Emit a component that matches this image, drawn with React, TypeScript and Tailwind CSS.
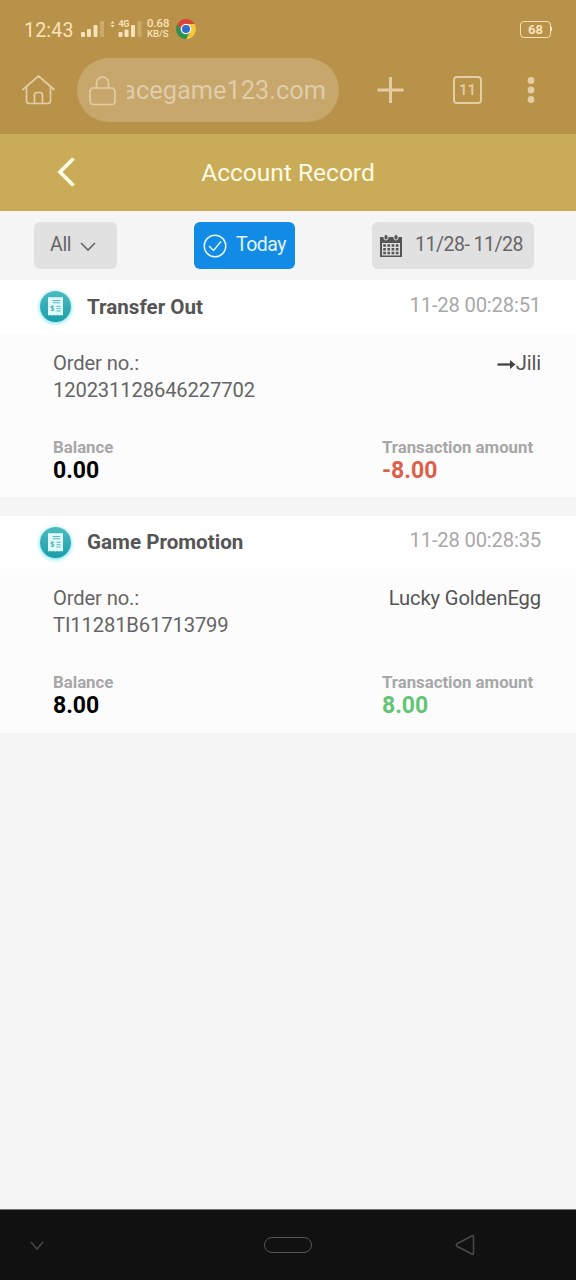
type TransactionRecord = {
  title: string;
  time: string;
  order: string;
  target: string;
  arrow?: boolean;
  balance: string;
  amount: string;
  amountClass: string;
};

const records: TransactionRecord[] = [
  {
    title: "Transfer Out",
    time: "11-28 00:28:51",
    order: "120231128646227702",
    target: "Jili",
    arrow: true,
    balance: "0.00",
    amount: "-8.00",
    amountClass: "text-[#dc6049]",
  },
  {
    title: "Game Promotion",
    time: "11-28 00:28:35",
    order: "TI11281B61713799",
    target: "Lucky GoldenEgg",
    balance: "8.00",
    amount: "8.00",
    amountClass: "text-[#63c474]",
  },
];

function StatusBar() {
  return (
    <div className="flex h-[58px] items-center pl-6 pr-6 text-[#f9e2b8]">
      <span className="mt-[3px] w-[50px] whitespace-nowrap text-[19.5px] leading-6 tracking-[0.2px]">12:43</span>
      <svg className="ml-1.5 h-[18px] w-[24px]" viewBox="80 20 24 18" fill="currentColor">
        <rect x="81" y="32" width="4" height="5" rx="1" />
        <rect x="87" y="29" width="4" height="8" rx="1" />
        <rect x="93.5" y="25" width="4" height="12" rx="1" />
        <rect x="100" y="21" width="4" height="16" rx="1" opacity=".3" />
      </svg>
      <div className="relative ml-[5px] h-[18px] w-[33px]">
        <svg className="h-[18px] w-[33px]" viewBox="109 20 33 18" fill="currentColor">
          <path d="M110.500 23.400 112.600 21l2.100 2.400zM110.500 25l2.100 2.400 2.100-2.400z" />
          <rect x="118.500" y="32" width="4" height="5" rx="1" />
          <rect x="124.500" y="29.500" width="4" height="7.500" rx="1" />
          <rect x="131" y="25" width="4" height="12" rx="1" />
          <rect x="137.500" y="21" width="4" height="16" rx="1" opacity=".3" />
        </svg>
        <span className="absolute left-[9.5px] top-0 text-[9px] font-bold leading-[8px] tracking-[-0.5px]">4G</span>
      </div>
      <div className="ml-[5px] flex w-[24px] flex-col whitespace-nowrap font-medium">
        <span className="text-[11.3px] leading-[10px]">0.68</span>
        <span className="text-[9.5px] leading-[10px]">KB/S</span>
      </div>
      <svg className="ml-[5px] h-[20px] w-[20px]" viewBox="-10 -10 20 20">
        <path d="M-8.66-5A10 10 0 0 1 8.66-5L0-5-4.33 2.5z" fill="#dc4435" />
        <path d="M8.66-5A10 10 0 0 1 0 10L4.33 2.5 0-5z" fill="#f5c83c" />
        <path d="M0 10A10 10 0 0 1-8.66-5L-4.33 2.5 4.33 2.5z" fill="#2d9150" />
        <circle r="5.3" fill="#fff5e4" />
        <circle r="4" fill="#2c70cf" />
      </svg>
      <div className="ml-auto flex items-center">
        <div className="flex h-[17px] w-[31px] items-center justify-center rounded-[4px] border-[1.5px] border-current text-[13px] font-bold leading-none">
          68
        </div>
        <div className="h-1 w-px bg-current" />
      </div>
    </div>
  );
}

function BrowserBar() {
  return (
    <div className="flex h-16 items-center pl-[22px] text-[#e3cda5]">
      <svg className="h-8 w-[33px]" viewBox="0 0 33 32" fill="none" stroke="currentColor" strokeWidth="1.7" strokeLinecap="round" strokeLinejoin="round">
        <path d="M1 15.5 16.500 2 32 15.500M4.500 13v13.500q0 3 3 3h18q3 0 3-3V13M12.500 29.500V21q0-2.500 2.500-2.500h3q2.500 0 2.500 2.500v8.500" />
      </svg>
      <div className="ml-[22px] flex h-16 w-[262px] items-center rounded-full bg-[#c7a76c] pl-3">
        <svg className="h-[31px] w-[27px]" viewBox="0 0 27 31" fill="none" stroke="currentColor" strokeWidth="1.7">
          <rect x="1" y="13" width="25" height="16.500" rx="3.500" />
          <path d="M7.500 13V8a6 6 0 0 1 12 0v5" />
        </svg>
        <div className="relative ml-[8px] flex w-[202px] justify-end whitespace-nowrap text-[25.4px] leading-8 text-[#dfccaa]">
          <span>acegame123.com</span>
          <div className="absolute -left-1 top-0 h-8 w-[7px] bg-[#c7a76c]" />
        </div>
      </div>
      <svg className="ml-[38px] h-[26px] w-[27px]" viewBox="0 0 27 26" fill="none" stroke="currentColor" strokeWidth="3">
        <path d="M.5 13h26M13.500 0v26" />
      </svg>
      <div className="ml-[49px] flex h-[28px] w-[29px] items-center justify-center rounded-[4px] border-2 border-current text-[15px] font-medium">
        11
      </div>
      <svg className="ml-[45px] h-[26px] w-[8px]" viewBox="0 0 8 26" fill="currentColor">
        <circle cx="4" cy="3.500" r="3.400" />
        <circle cx="4" cy="13" r="3.400" />
        <circle cx="4" cy="22.500" r="3.400" />
      </svg>
    </div>
  );
}

function PageHeader() {
  return (
    <header className="grid h-[77px] grid-cols-[1fr_auto_1fr] items-center bg-[#caac58] text-[#fffbe4]">
      <svg className="-mt-[2px] ml-[57px] h-[30px] w-[19px]" viewBox="0 0 19 30" fill="none" stroke="currentColor" strokeWidth="3.8">
        <path d="M16.500 1.500 3 15l13.500 13.500" />
      </svg>
      <h1 className="whitespace-nowrap text-[24.5px] leading-8">Account Record</h1>
    </header>
  );
}

function CalendarIcon() {
  return (
    <svg className="h-6 w-[22px]" viewBox="0 0 22 24">
      <path d="M0 3h22v20H0z" fill="#555" />
      <path d="M2 9h18v12.500H2z" fill="#e1e1e1" />
      <g stroke="#e1e1e1" strokeWidth="1">
        <rect x="4" y=".5" width="4" height="5.500" rx="2" fill="#555" />
        <rect x="14" y=".5" width="4" height="5.500" rx="2" fill="#555" />
      </g>
      <path d="M3.200 11.500h16M3.200 15.300h16M3.200 19h16" stroke="#555" strokeWidth="2.400" strokeDasharray="2.700 1.500" />
    </svg>
  );
}

function Filters() {
  return (
    <div className="flex h-[69px] items-start pl-[34px] pt-[11px] text-[19.5px] tracking-[-0.5px] text-[#666]">
      <button className="flex h-[47px] w-[83px] items-center rounded-[6px] bg-[#e1e1e1] pl-4">
        <span className="-mt-px tracking-[-0.3px]">All</span>
        <svg className="ml-[9px] mt-0.5 h-[10px] w-[16px]" viewBox="0 0 16 10" fill="none" stroke="currentColor" strokeWidth="1.600">
          <path d="m1 1 7 7 7-7" />
        </svg>
      </button>
      <button className="ml-[77px] flex h-[47px] w-[101px] items-center whitespace-nowrap rounded-[6px] bg-[#128be6] pl-[9px] text-[#e3f4ff]">
        <svg className="h-6 w-6" viewBox="0 0 24 24" fill="none" stroke="currentColor" strokeWidth="1.500">
          <circle cx="12" cy="12" r="10.800" />
          <path d="m6 12 4.500 4.500L18 7.500" />
        </svg>
        <span className="-mt-px ml-[9px]">Today</span>
      </button>
      <button className="ml-[77px] flex h-[47px] w-[162px] items-center whitespace-nowrap rounded-[6px] bg-[#e1e1e1] pl-2">
        <CalendarIcon />
        <span className="-mt-px ml-[13px]">11/28- 11/28</span>
      </button>
    </div>
  );
}

function ReceiptIcon() {
  return (
    <div className="flex h-[31px] w-[31px] items-center justify-center rounded-full bg-linear-to-b from-[#4bbcc1] to-[#159daa] shadow-[0_1px_4px_#57dce8]">
      <svg className="h-[19px] w-[15px]" viewBox="0 0 16 20">
        <path d="M0 0h16v19.500l-2-.5-2 .5-2-.5-2 .5-2-.5-2 .5-2-.5-2 .5z" fill="#e2fbfc" />
        <path d="M5 3.500h8M5 6h8M9 9.800h4.500M9 12.300h4.500M9 14.800h4.500M6.500 9.800q-3-1-3.300.8-.1 1 1.500 1.200 2 .3 1.500 1.700-.5 1.300-3.200.5M4.700 8.700v6" fill="none" stroke="#58b9c0" strokeWidth="1.100" />
      </svg>
    </div>
  );
}

function RecordCard({ record }: { record: TransactionRecord }) {
  return (
    <article className="group h-[218px] border-t border-[#f5f5f5] bg-[#fcfcfc] first:h-[217px] first:border-t-0">
      <header className="flex h-[53px] items-center bg-white pb-px pl-[40px] pr-[35px] group-first:h-[54px]">
        <ReceiptIcon />
        <h2 className="ml-4 text-[20.6px] font-bold leading-6 text-[#555]">{record.title}</h2>
        <time className="-mt-1 ml-auto text-[20.2px] leading-6 tracking-[-0.17px] text-[#a8a8a8]">{record.time}</time>
      </header>
      <div className="flex justify-between pl-[53px] pr-[35px] pt-4 text-[20.2px] leading-[27px] tracking-[-0.13px] text-[#656565]">
        <div>
          <p>Order no.:</p>
          <p>{record.order}</p>
        </div>
        <p className="flex items-start text-[#555]">
          {record.arrow && (
            <svg className="mt-[8px] h-[13px] w-[19px]" viewBox="0 0 19 13" fill="none" stroke="#444" strokeWidth="2.300">
              <path d="M.5 6.500h14" />
              <path d="m13 2 5.500 4.500L13 11z" fill="#444" stroke="none" />
            </svg>
          )}
          {record.target}
        </p>
      </div>
      <div className="mt-[33px] grid grid-cols-[329px_1fr] pl-[53px] font-bold">
        <div>
          <p className="text-[16.8px] leading-5 text-[#a7a7a7]">Balance</p>
          <p className="text-[23px] leading-[27px] text-black">{record.balance}</p>
        </div>
        <div>
          <p className="text-[16.8px] leading-5 text-[#a7a7a7]">Transaction amount</p>
          <p className={"text-[23px] leading-[27px] " + record.amountClass}>{record.amount}</p>
        </div>
      </div>
    </article>
  );
}

function NavigationBar() {
  return (
    <nav className="flex h-[71px] items-center border-t border-[#777] bg-[#111] pl-[30px] text-[#484848]">
      <svg className="h-[9px] w-[14px]" viewBox="0 0 14 9" fill="none" stroke="currentColor" strokeWidth="1.500">
        <path d="m1 1 6 7 6-7" />
      </svg>
      <div className="ml-[220px] h-4 w-12 rounded-full border-[1.5px] border-[#555]" />
      <svg className="ml-[143px] h-[22px] w-[20px]" viewBox="0 0 20 22" fill="none" stroke="currentColor" strokeWidth="1.600" strokeLinejoin="round">
        <path d="M18.500 3v16q0 2-1.800 1L2 12.200q-1.500-1.200 0-2.400L16.700 2q1.800-1 1.800 1" />
      </svg>
    </nav>
  );
}

export default function App() {
  return (
    <div className="flex h-[1280px] w-[576px] flex-col overflow-hidden bg-[#f5f5f5] font-[Roboto,sans-serif]">
      <div className="h-[134px] shrink-0 bg-[#b9924a]">
        <StatusBar />
        <BrowserBar />
      </div>
      <PageHeader />
      <Filters />
      <main className="flex flex-1 flex-col gap-[18px]">
        {records.map((record) => (
          <RecordCard key={record.order} record={record} />
        ))}
      </main>
      <NavigationBar />
    </div>
  );
}
